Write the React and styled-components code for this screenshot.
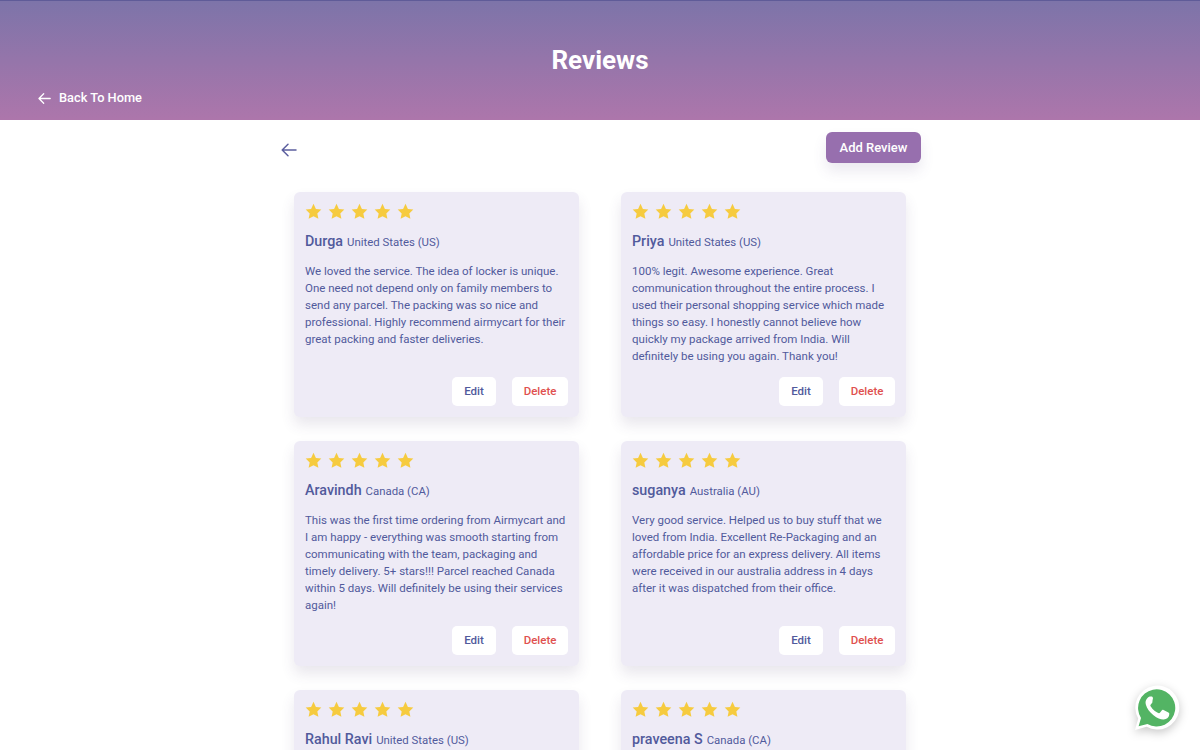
import React from "react";
import styled, { createGlobalStyle } from "styled-components";

const Global = createGlobalStyle`
  html, body { margin: 0; padding: 0; height: 750px; overflow: hidden; background: #fff; }
  body { font-family: Roboto, "Liberation Sans", sans-serif; }
  * { box-sizing: border-box; }
`;
const Page = styled.div`height: 750px; overflow: hidden;`;
const Hero = styled.header`
  height: 120px;
  border-top: 1px solid #5f5b98;
  background: linear-gradient(180deg, #7d74a9 0%, #ad76ab 100%);
  color: #fff;
  padding: 0 38px;
  display: flex;
  flex-direction: column;
`;
const Title = styled.h1`
  margin: 44px 0 0;
  font-size: 26px;
  line-height: 30px;
  font-weight: 700;
  text-align: center;
`;
const HomeLink = styled.a`
  margin-top: 14px;
  display: flex;
  align-items: center;
  gap: 8px;
  font-size: 12.8px;
  line-height: 18px;
  font-weight: 500;
`;
const Main = styled.main`
  width: 642px;
  margin: 0 auto;
`;
const TopBar = styled.div`
  display: flex;
  justify-content: space-between;
  align-items: flex-start;
  padding: 12px 0 0 2px;
  height: 71.5px;
`;
const BackBtn = styled.span`
  display: flex;
  margin-top: 10px;
  color: #5c5f9f;
`;
const AddBtn = styled.button`
  width: 95px;
  height: 31px;
  border: 0;
  border-radius: 6px;
  background: #976fae;
  color: #fff;
  font: 500 13px Roboto, sans-serif;
  box-shadow: 0 8px 14px rgba(90, 70, 130, .12);
`;
const Grid = styled.section`
  display: grid;
  grid-template-columns: 285px 285px;
  column-gap: 42px;
  row-gap: 24px;
  justify-content: center;
`;
const Card = styled.article`
  height: 225px;
  padding: 11px;
  border-radius: 6px;
  background: #eeebf6;
  box-shadow: 0 8px 14px rgba(70, 60, 110, .12);
  display: flex;
  flex-direction: column;
  color: #515a9c;
`;
const Stars = styled.div`
  display: flex;
  gap: 6px;
  height: 18px;
  color: #f6cb3f;
`;
const Name = styled.div`
  margin-top: 11px;
  line-height: 18px;
  height: 18px;
  white-space: nowrap;
`;
const Strong = styled.span`
  font-size: 14.3px;
  font-weight: 500;
  margin-right: 4px;
`;
const Place = styled.span`
  font-size: 11.4px;
`;
const Body = styled.p`
  margin: 13px 0 0;
  font-size: 11.5px;
  line-height: 17.1px;
  height: 103px;
`;
const Actions = styled.div`
  margin-top: auto;
  display: flex;
  justify-content: flex-end;
  gap: 16px;
`;
const Btn = styled.button`
  height: 29px;
  width: ${p => p.$w}px;
  border: 0;
  border-radius: 5px;
  background: #fff;
  color: ${p => p.$danger ? "#e0504f" : "#515a9c"};
  font: 500 11.5px Roboto, sans-serif;
`;
const Whats = styled.div`
  position: fixed;
  left: 1134px;
  top: 685px;
  filter: drop-shadow(0 3px 5px rgba(0,0,0,.22));
  display: flex;
`;

const Arrow = ({ size = 16, sw = 1.5 }) => (
  <svg width={size} height={size} viewBox="0 0 16 16" fill="none" stroke="currentColor" strokeWidth={sw} strokeLinecap="round" strokeLinejoin="round">
    <path d="M15 8H1.5M7 2.2 1.2 8 7 13.8" />
  </svg>
);
const Star = () => (
  <svg width="17" height="17" viewBox="0 0 24 24" fill="currentColor">
    <path d="M12 1.2 15.4 8.3 23 9.3 17.4 14.7 18.9 22.4 12 18.6 5.1 22.4 6.6 14.7 1 9.3 8.6 8.3Z" />
  </svg>
);

const reviews = [
  ["Durga", "United States (US)", "We loved the service. The idea of locker is unique. One need not depend only on family members to send any parcel. The packing was so nice and professional. Highly recommend airmycart for their great packing and faster deliveries."],
  ["Priya", "United States (US)", "100% legit. Awesome experience. Great communication throughout the entire process. I used their personal shopping service which made things so easy. I honestly cannot believe how quickly my package arrived from India. Will definitely be using you again. Thank you!"],
  ["Aravindh", "Canada (CA)", "This was the first time ordering from Airmycart and I am happy - everything was smooth starting from communicating with the team, packaging and timely delivery. 5+ stars!!! Parcel reached Canada within 5 days. Will definitely be using their services again!"],
  ["suganya", "Australia (AU)", "Very good service. Helped us to buy stuff that we loved from India. Excellent Re-Packaging and an affordable price for an express delivery. All items were received in our australia address in 4 days after it was dispatched from their office."],
  ["Rahul Ravi", "United States (US)", ""],
  ["praveena S", "Canada (CA)", ""],
];

export default function App() {
  return (
    <Page>
      <Global />
      <Hero>
        <Title>Reviews</Title>
        <HomeLink><Arrow size={13} sw={1.6} />Back To Home</HomeLink>
      </Hero>
      <Main>
        <TopBar>
          <BackBtn><Arrow /></BackBtn>
          <AddBtn>Add Review</AddBtn>
        </TopBar>
        <Grid>
          {reviews.map(([n, p, t]) => (
            <Card key={n}>
              <Stars>{[0, 1, 2, 3, 4].map(i => <Star key={i} />)}</Stars>
              <Name><Strong>{n}</Strong><Place>{p}</Place></Name>
              <Body>{t}</Body>
              <Actions>
                <Btn $w={44}>Edit</Btn>
                <Btn $w={56} $danger>Delete</Btn>
              </Actions>
            </Card>
          ))}
        </Grid>
      </Main>
      <Whats>
        <svg width="46" height="46" viewBox="0 0 46 46">
          <path fill="#fff" d="M1 45 4.2 33.5A22 22 0 1 1 12.6 41.8Z" />
          <path fill="#53b464" d="M4.6 41.2 7 32.9A18.6 18.6 0 1 1 13.4 39Z" />
          <path fill="#fff" d="M16.5 11.5c-.8 0-2 .4-3 1.6-1 1.2-2.6 3-1.6 6.6 1 3.500 3.600 7.300 7.600 10.600 4 3.200 7.500 4.400 10.300 4.200 2.800-.2 4.800-2.200 5.200-3.800.4-1.600.3-2.500.1-2.800-.3-.4-1-.7-2.100-1.200l-3.500-1.700c-.8-.3-1.300-.2-1.800.5l-1.800 2.200c-.4.500-.8.600-1.500.2-1.500-.7-3.100-1.400-5-3.200-1.500-1.400-2.500-3-2.900-3.700-.4-.7 0-1.100.3-1.500l1.400-1.700c.3-.5.400-.9.200-1.500L19 13c-.5-1.200-1-1.500-1.500-1.500Z" />
        </svg>
      </Whats>
    </Page>
  );
}
